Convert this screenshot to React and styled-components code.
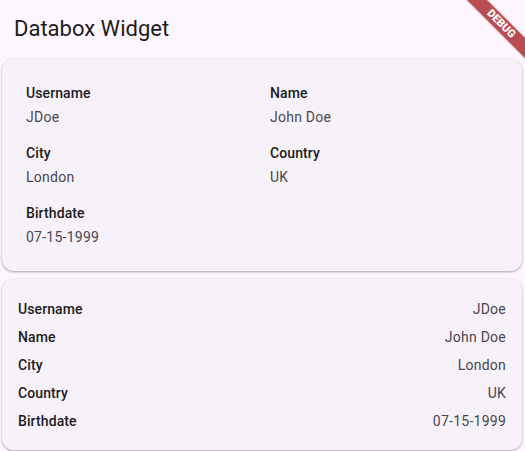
import React from 'react'
import styled, { createGlobalStyle } from 'styled-components'

const GlobalStyle = createGlobalStyle`
  html, body {
    margin: 0;
    padding: 0;
    background: #fef7ff;
    font-family: Roboto, "Noto Sans", sans-serif;
    color: #1d1b20;
  }
  * { box-sizing: border-box; }
`

const person = [
  { label: 'Username', value: 'JDoe' },
  { label: 'Name', value: 'John Doe' },
  { label: 'City', value: 'London' },
  { label: 'Country', value: 'UK' },
  { label: 'Birthdate', value: '07-15-1999' },
]

const Page = styled.div`
  position: relative;
  width: 525px;
  height: 451px;
  overflow: hidden;
  background: #fef7ff;
`

const AppBar = styled.header`
  height: 56px;
  display: flex;
  align-items: center;
  padding-left: 14px;
  font-size: 22px;
  font-weight: 400;
  color: #1d1b20;
`

const Content = styled.main`
  display: flex;
  flex-direction: column;
  gap: 8px;
  padding: 3px 3px 0 2px;
`

const Card = styled.section`
  background: #f7f2fa;
  border-radius: 12px;
  box-shadow: 0 1px 2px rgba(0, 0, 0, 0.25), 0 1px 3px 1px rgba(0, 0, 0, 0.08);
  padding: ${(p) => p.$pad};
`

const Grid = styled.div`
  display: grid;
  grid-template-columns: 1fr 1fr;
  column-gap: 16px;
  row-gap: 16px;
`

const Field = styled.div`
  display: flex;
  flex-direction: column;
  gap: 4px;
`

const Label = styled.div`
  font-size: 14px;
  line-height: 20px;
  font-weight: 500;
  letter-spacing: 0.1px;
  color: #1d1b20;
`

const Value = styled.div`
  font-size: 14px;
  line-height: 20px;
  font-weight: 400;
  letter-spacing: 0.25px;
  color: #49454f;
`

const List = styled.div`
  display: flex;
  flex-direction: column;
  gap: 8px;
`

const Row = styled.div`
  display: flex;
  justify-content: space-between;
  align-items: center;
`

const Banner = styled.div`
  position: absolute;
  top: 24px;
  right: 24px;
  width: 140px;
  height: 14px;
  margin-right: -70px;
  margin-top: -7px;
  transform: rotate(45deg);
  background: rgba(165, 30, 32, 0.78);
  box-shadow: 0 0 3px rgba(0, 0, 0, 0.25);
  color: #fff;
  font-family: Roboto, "DejaVu Sans", sans-serif;
  font-weight: 900;
  font-size: 11px;
  line-height: 14px;
  text-align: center;
`

const App = () => {
  return (
    <Page>
      <GlobalStyle />
      <AppBar>Databox Widget</AppBar>
      <Content>
        <Card $pad="24px">
          <Grid>
            {person.map((f) => (
              <Field key={f.label}>
                <Label>{f.label}</Label>
                <Value>{f.value}</Value>
              </Field>
            ))}
          </Grid>
        </Card>
        <Card $pad="20px 16px 19px 16px">
          <List>
            {person.map((f) => (
              <Row key={f.label}>
                <Label>{f.label}</Label>
                <Value>{f.value}</Value>
              </Row>
            ))}
          </List>
        </Card>
      </Content>
      <Banner>DEBUG</Banner>
    </Page>
  )
}

export default App
